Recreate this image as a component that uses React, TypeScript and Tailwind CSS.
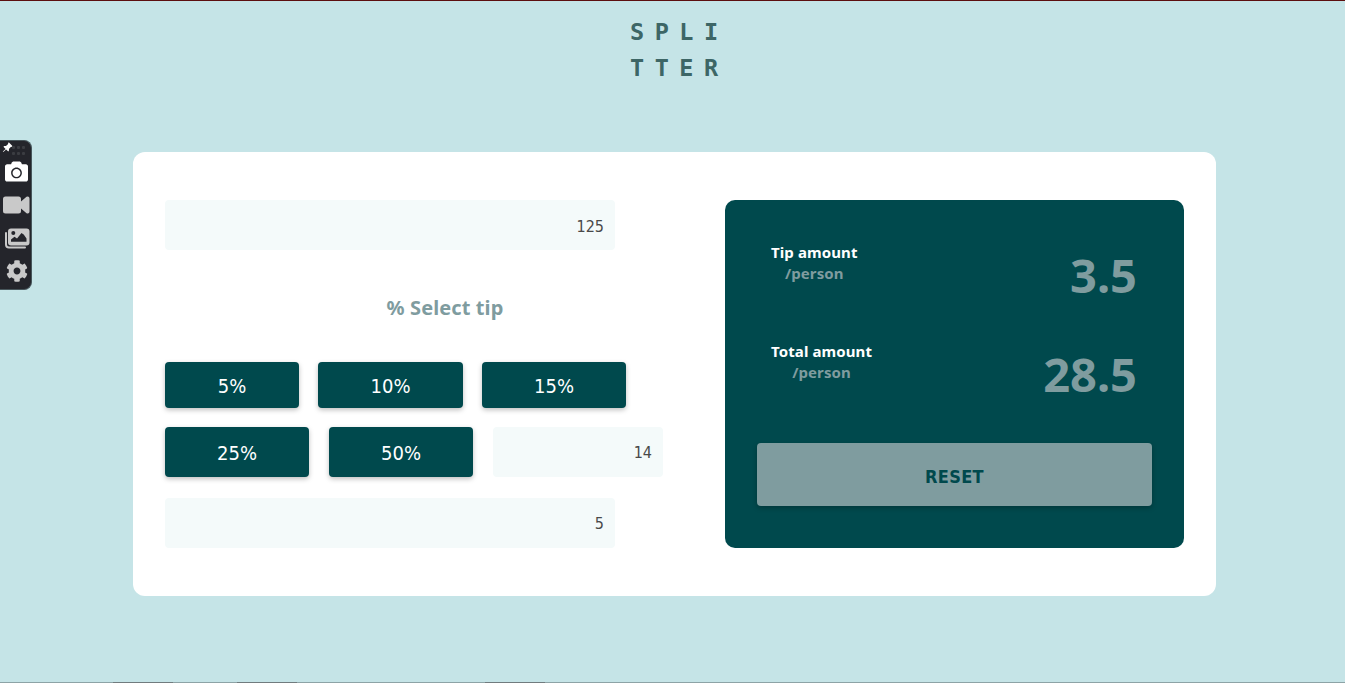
import { FaCamera, FaCog } from "react-icons/fa";
import { BsPinAngleFill } from "react-icons/bs";

const inputClass =
  "h-[50px] rounded-[4px] bg-[#f4fafa] pr-[11px] pt-[3px] text-right font-['DejaVu_Sans_Condensed','DejaVu_Sans',sans-serif] [font-stretch:75%] text-[16px] text-[#494949] outline-none";
const tipClass =
  "flex items-center justify-center rounded-[4px] bg-[#00494d] pt-[2px] font-['DejaVu_Sans_Condensed','DejaVu_Sans',sans-serif] [font-stretch:75%] text-[20px] text-white shadow-[0_2px_5px_rgba(0,0,0,0.25)]";

function GalleryIcon() {
  return (
    <svg width="26" height="21" viewBox="0 0 26 21" fill="none">
      <path d="M2 5v11.500a3 3 0 0 0 3 3h16" stroke="#c9c9c9" strokeWidth="2" strokeLinecap="round" />
      <rect x="4" y="0.5" width="21.500" height="17" rx="3" fill="#c9c9c9" />
      <circle cx="9.300" cy="5" r="2" fill="#24252b" />
      <path d="M7 13.800V11.500L10.500 8.800l2.500 1.700L17.500 5l2.200 1.500 2.800 4v3.300z" fill="#24252b" />
    </svg>
  );
}

function VideoIcon() {
  return (
    <svg width="27" height="18" viewBox="0 0 27 18" fill="#c9c9c9">
      <path d="M2.500 0.500h13a2.500 2.500 0 0 1 2.500 2.500v2.500L23.500 0.700Q26.500 0 26.500 2.500v13Q26.500 18 23.500 17.200L18 12.500V15a2.500 2.500 0 0 1-2.500 2.500h-13A2.500 2.500 0 0 1 0 15V3A2.500 2.500 0 0 1 2.500 0.500z" />
    </svg>
  );
}

function CaptureToolbar() {
  return (
    <aside className="absolute left-0 top-[140px] h-[150px] w-8 rounded-r-[8px] border border-l-0 border-[#47565b] bg-[#24252b]">
      <div className="flex h-[18px] items-start pl-[2px] pt-px">
        <BsPinAngleFill className="size-[11px] text-white" />
        <svg width="16" height="13" viewBox="0 0 16 13" fill="#3b3d42" className="-ml-[3px] mt-[2px]">
          {[2, 7, 12].map((x) =>
            [2, 8].map((y) => <rect key={`${x}-${y}`} x={x} y={y} width="3" height="3" rx="1" />),
          )}
        </svg>
      </div>
      <div className="flex flex-col items-center pl-[2px] text-[#c9c9c9]">
        <FaCamera className="mt-px size-[23px] text-white" />
        <div className="mt-[13px] h-[18px]"><VideoIcon /></div>
        <div className="mt-[14px] h-[21px]"><GalleryIcon /></div>
        <FaCog className="mt-[11px] size-[22px]" />
      </div>
    </aside>
  );
}

function Result({ label, value }: { label: string; value: string }) {
  return (
    <div className="flex h-[99px] justify-between">
      <div className="h-[42px] text-center text-[15px] font-bold leading-[21px] tracking-[0.100px] text-white">
        <p>{label}</p>
        <p className="text-[#7f9c9f]">/person</p>
      </div>
      <p className="pt-px text-[47px] font-bold leading-[64px] text-[#7f9c9f]">{value}</p>
    </div>
  );
}

export default function App() {
  return (
    <div className="relative flex h-[684px] w-[1345px] flex-col overflow-hidden bg-[#c5e4e7] font-['Noto_Sans','Open_Sans',sans-serif]">
      <div className="h-px shrink-0 bg-[#5c0f0f]" />
      <CaptureToolbar />
      <h1 className="ml-[630px] mt-[13px] h-[138px] whitespace-pre font-['DejaVu_Sans_Mono',monospace] text-[23.500px] font-bold leading-[36px] tracking-[10.500px] text-[#3d6666]">
        {"SPLI\nTTER"}
      </h1>
      <main className="ml-[133px] flex h-[444px] w-[1083px] shrink-0 justify-between rounded-[12px] bg-white px-8 py-12">
        <section className="flex w-[560px] flex-col items-start">
          <input className={`${inputClass} w-[450px]`} defaultValue="125" aria-label="Bill" />
          <h2 className="mt-[43px] flex h-[30px] w-[560px] items-center justify-center text-[20px] font-bold tracking-[0.100px] text-[#7f9c9f]">% Select tip</h2>
          <div className="mt-[39px] flex h-[46px]">
            <button className={`${tipClass} w-[134px]`}>5%</button>
            <button className={`${tipClass} ml-[19px] w-[145px]`}>10%</button>
            <button className={`${tipClass} ml-[19px] w-[144px]`}>15%</button>
          </div>
          <div className="mt-[19px] flex h-[50px] gap-5">
            <button className={`${tipClass} w-[144px]`}>25%</button>
            <button className={`${tipClass} w-[144px]`}>50%</button>
            <input className={`${inputClass} w-[170px] pb-[2px]`} defaultValue="14" aria-label="Custom tip" />
          </div>
          <input className={`${inputClass} mt-[21px] w-[450px] pb-[2px]`} defaultValue="5" aria-label="People" />
        </section>
        <section className="flex w-[459px] flex-col rounded-[10px] bg-[#00494d] px-8 pt-[42px]">
          <div className="pl-[14px] pr-[15px]">
            <Result label="Tip amount" value="3.5" />
            <Result label="Total amount" value="28.5" />
          </div>
          <button className="mt-[3px] h-[63px] rounded-[4px] bg-[#7f9c9f] pt-[4px] font-['DejaVu_Sans_Condensed','DejaVu_Sans',sans-serif] [font-stretch:75%] text-[18px] font-bold tracking-[0.300px] text-[#00494d] shadow-[0_2px_5px_rgba(0,0,0,0.25)]">RESET</button>
        </section>
      </main>
      <footer className="mt-auto flex h-[2px] shrink-0 border-b border-white bg-[#8da3a6]">
        <span className="ml-[113px] h-px w-[60px] bg-[#717b7e]" />
        <span className="ml-[64px] h-px w-[60px] bg-[#717b7e]" />
        <span className="ml-[188px] h-px w-[60px] bg-[#717b7e]" />
      </footer>
    </div>
  );
}
